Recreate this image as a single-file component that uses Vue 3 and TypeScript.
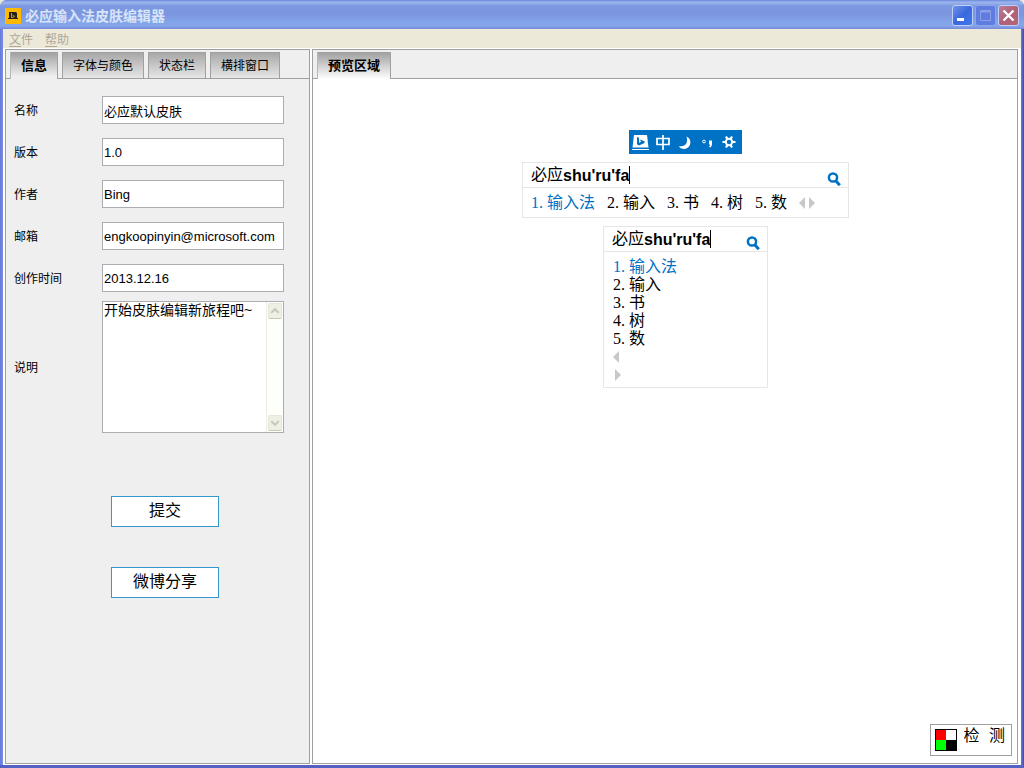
<script setup lang="ts">
import { ref, reactive } from 'vue'

interface Field {
  id: string
  label: string
  value: string
}

const tabs: string[] = ['信息', '字体与颜色', '状态栏', '横排窗口']
const activeTab = ref<number>(0)

const fields = reactive<Field[]>([
  { id: 'name', label: '名称', value: '必应默认皮肤' },
  { id: 'version', label: '版本', value: '1.0' },
  { id: 'author', label: '作者', value: 'Bing' },
  { id: 'mail', label: '邮箱', value: 'engkoopinyin@microsoft.com' },
  { id: 'created', label: '创作时间', value: '2013.12.16' },
])
const description = ref<string>('开始皮肤编辑新旅程吧~')

const candidates: string[] = ['输入法', '输入', '书', '树', '数']
</script>

<template>
  <div class="window">
    <header class="titlebar">
      <svg class="app-icon" viewBox="0 0 16 16" aria-hidden="true">
        <rect width="16" height="16" fill="#ffb900" />
        <path d="M4 4h7l1 1v5h1v1H3v-1h1z" fill="#222" />
        <path d="M6.500 5v4.500h1.500l1.500-1.200-2-1" fill="none" stroke="#ffb900" stroke-width=".8" />
      </svg>
      <h1 class="title">必应输入法皮肤编辑器</h1>
      <div class="caption">
        <button class="cap min" type="button" aria-label="最小化">
          <svg viewBox="0 0 21 21"><rect x="5" y="13" width="7" height="3" fill="#fff" /></svg>
        </button>
        <button class="cap max" type="button" aria-label="最大化" disabled>
          <svg viewBox="0 0 21 21">
            <path d="M5.500 5.500h10v10h-10z" fill="none" stroke="#8d9fe8" />
            <path d="M5 6.500h11" stroke="#8d9fe8" stroke-width="2" />
          </svg>
        </button>
        <button class="cap close" type="button" aria-label="关闭">
          <svg viewBox="0 0 21 21"><path d="M5.500 5.500l10 10M15.500 5.500l-10 10" stroke="#fff" stroke-width="2.400" /></svg>
        </button>
      </div>
    </header>

    <nav class="menubar">
      <button type="button"><u>文</u>件</button>
      <button type="button"><u>帮</u>助</button>
    </nav>

    <main class="panes">
      <section class="pane side">
        <div class="tabstrip" role="tablist">
          <button
            v-for="(tab, i) in tabs"
            :key="tab"
            class="tab"
            :class="{ active: activeTab === i }"
            type="button"
            role="tab"
            :aria-selected="activeTab === i"
            @click="activeTab = i"
          >{{ tab }}</button>
        </div>
        <form class="form" @submit.prevent>
          <div class="fields">
            <div v-for="f in fields" :key="f.id" class="row">
              <label :for="f.id">{{ f.label }}</label>
              <input :id="f.id" v-model="f.value" type="text" />
            </div>
          </div>
          <div class="row">
            <label for="desc">说明</label>
            <div class="memo">
              <textarea id="desc" v-model="description" spellcheck="false"></textarea>
              <div class="scrollbar">
                <button type="button" aria-label="向上">
                  <svg viewBox="0 0 13 14"><path d="M2.500 9l4-4 4 4" fill="none" stroke="#c6c5ba" stroke-width="2.200" /></svg>
                </button>
                <button type="button" aria-label="向下">
                  <svg viewBox="0 0 13 14"><path d="M2.500 5l4 4 4-4" fill="none" stroke="#c6c5ba" stroke-width="2.200" /></svg>
                </button>
              </div>
            </div>
          </div>
          <div class="actions">
            <button class="action" type="submit">提交</button>
            <button class="action" type="button">微博分享</button>
          </div>
        </form>
      </section>

      <section class="pane preview">
        <div class="tabstrip" role="tablist">
          <button class="tab active light" type="button" role="tab" aria-selected="true">预览区域</button>
        </div>
        <div class="stage">
          <div class="status">
            <button type="button" aria-label="Bing">
              <svg viewBox="0 0 22 24">
                <path d="M4 5h13l1.500 12.500H2.500z" fill="#fff" />
                <path d="M2 18h17v2H2z" fill="#fff" />
                <path d="M2 18h17v1H2z" fill="#0072c6" />
                <path d="M7 7l2 .7v5l2-1-1-2.200 4.500 1.700v1.800L9 15.500l-2-1.200z" fill="#0072c6" />
              </svg>
            </button>
            <button type="button" aria-label="中文">
              <svg viewBox="0 0 22 24">
                <path d="M5 8.500h12v6H5zM11 5v15" fill="none" stroke="#fff" stroke-width="1.700" />
              </svg>
            </button>
            <button type="button" aria-label="半角">
              <svg viewBox="0 0 22 24">
                <path d="M12.500 6.500c6 2.500 5 11.500-2 12.500-3 0-5-1-5.500-3 6 1.500 9.500-3 7.500-9.500z" fill="#fff" />
              </svg>
            </button>
            <button type="button" aria-label="标点">
              <svg viewBox="0 0 22 24">
                <circle cx="8" cy="11.500" r="1.400" fill="none" stroke="#fff" />
                <path d="M13 10.500h3v3.500c0 2-1 3-2 3.500l-1-1c1-.5 1-1 1-2h-1z" fill="#fff" />
              </svg>
            </button>
            <button type="button" aria-label="设置">
              <svg viewBox="0 0 22 24">
                <path d="M4.500 12h13M8 6.500l6 11M14 6.500l-6 11" stroke="#fff" stroke-width="2.200" />
                <circle cx="11" cy="12" r="3.200" fill="#0072c6" stroke="#fff" stroke-width="2" />
              </svg>
            </button>
          </div>

          <div class="ime wide">
            <div class="compose">
              <span>必应</span><b>shu'ru'fa</b><i class="caret"></i>
              <svg class="glass" viewBox="0 0 14 14" aria-hidden="true">
                <circle cx="6" cy="5.500" r="4.100" fill="none" stroke="#0072c6" stroke-width="2.500" />
                <path d="M8.500 8.500l4.300 4.700" stroke="#0072c6" stroke-width="3" />
              </svg>
            </div>
            <ol class="cands">
              <li v-for="(c, i) in candidates" :key="c" :class="{ first: i === 0 }"><span class="num">{{ i + 1 }}.</span>{{ c }}</li>
              <li class="pager">
                <svg viewBox="0 0 17 12"><path d="M6 0v12L0 6zM10 0v12l6-6z" fill="#c8c8c8" /></svg>
              </li>
            </ol>
          </div>

          <div class="ime tall">
            <div class="compose">
              <span>必应</span><b>shu'ru'fa</b><i class="caret"></i>
              <svg class="glass" viewBox="0 0 14 14" aria-hidden="true">
                <circle cx="6" cy="5.500" r="4.100" fill="none" stroke="#0072c6" stroke-width="2.500" />
                <path d="M8.500 8.500l4.300 4.700" stroke="#0072c6" stroke-width="3" />
              </svg>
            </div>
            <ol class="cands">
              <li v-for="(c, i) in candidates" :key="c" :class="{ first: i === 0 }"><span class="num">{{ i + 1 }}.</span>{{ c }}</li>
              <li class="arrow"><svg viewBox="0 0 8 12"><path d="M6 0v12L0 6z" fill="#c8c8c8" /></svg></li>
              <li class="arrow"><svg viewBox="0 0 8 12"><path d="M2 0v12l6-6z" fill="#c8c8c8" /></svg></li>
            </ol>
          </div>
        </div>
        <button class="check" type="button">
          <svg viewBox="0 0 22 22" aria-hidden="true">
            <rect width="22" height="22" fill="#000" />
            <rect x="1" y="1" width="10" height="10" fill="#f00" />
            <rect x="11" y="1" width="10" height="10" fill="#fff" />
            <rect x="1" y="11" width="10" height="10" fill="#0f0" />
          </svg>
          <span>检 测</span>
        </button>
      </section>
    </main>
  </div>
</template>

<style>
body {
  background: #ece9d8;
}
</style>

<style scoped>
* {
  box-sizing: border-box;
}
.window {
  display: flex;
  flex-direction: column;
  min-height: 100vh;
  padding: 0 3px 3px;
  background: linear-gradient(90deg, #6a78d8, #7b8fe4 3px, #7b8fe4 calc(100% - 3px), #6a7ade calc(100% - 3px), #4048a8);
  border-radius: 7px 7px 0 0;
  box-shadow: inset 0 -3px #5560c4;
  font: 12px/16px "Liberation Sans", "Noto Sans CJK SC", sans-serif;
  color: #000;
}
button {
  font: inherit;
  color: inherit;
  padding: 0;
  border: 0;
  background: none;
}
svg {
  display: block;
}
.titlebar {
  display: flex;
  align-items: center;
  height: 29px;
  margin: 0 -3px;
  padding: 2px 5px 0 5px;
  border-radius: 7px 7px 0 0;
  background: linear-gradient(#6a86dc 0, #98b2ec 2px, #98b2ec 3px, #7c98e0 6px, #7b96df 14px, #82a4e9 22px, #84a5ea 26px, #7689dc 29px);
}
.app-icon {
  width: 16px;
  height: 16px;
}
.title {
  flex: 1;
  margin: 0 0 0 4px;
  font-size: 14px;
  line-height: 20px;
  font-weight: 700;
  color: #d8e4f8;
}
.caption {
  display: flex;
  gap: 2px;
}
.cap {
  width: 21px;
  height: 21px;
  border: 1px solid #c0d0f8;
  border-radius: 3px;
}
.cap svg {
  width: 21px;
  height: 21px;
  margin: -1px;
}
.min {
  background: linear-gradient(135deg, #6f92ee, #3a68dd 50%, #3f78ec);
}
.max {
  background: #5f7de0;
  border-color: #8fa4ec;
}
.close {
  background: linear-gradient(135deg, #b88098, #b06078 50%, #b46470);
}
.menubar {
  display: flex;
  gap: 12px;
  height: 19px;
  padding: 2px 6px 0;
  background: #ece9d8;
  color: #aca899;
}
.menubar u {
  text-underline-offset: 2px;
}
.panes {
  flex: 1;
  display: flex;
  gap: 2px;
  padding: 1px 3px 1px 2px;
  background: #fff;
}
.pane {
  display: flex;
  flex-direction: column;
  border: 1px solid #a0a0a0;
}
.side {
  width: 305px;
  background: #efefef;
}
.preview {
  flex: 1;
}
.tabstrip {
  display: flex;
  gap: 4px;
  height: 29px;
  padding: 2px 4px 0;
  background: #efefef;
  border-bottom: 1px solid #a0a0a0;
}
.tab {
  height: 26px;
  padding: 0 10px;
  border: 1px solid #a0a0a0;
  border-bottom: 0;
  background: linear-gradient(#a8a8a8, #e6e6e6);
}
.tab.active {
  height: 27px;
  font-size: 13px;
  font-weight: 700;
  border-left-color: #b8b8b8;
  background: linear-gradient(#a2a2a2, #efefef 90%);
}
.tab.active.light {
  background: linear-gradient(#a2a2a2, #fff);
}
.form {
  padding: 17px 8px;
}
.fields {
  display: grid;
  gap: 14px;
  margin-bottom: 9px;
}
.row {
  display: grid;
  grid-template-columns: 88px 182px;
  align-items: center;
}
.row label {
  padding-top: 2px;
}
.row input {
  width: 100%;
  height: 28px;
  padding: 0 1px;
  border: 1px solid #abadb3;
  background: #fff;
  font: 13px/20px "Liberation Sans", "Noto Sans CJK SC", sans-serif;
  color: #000;
}
.memo {
  display: flex;
  height: 132px;
  border: 1px solid #abadb3;
  background: #fff;
}
.memo textarea {
  flex: 1;
  min-width: 0;
  padding: 0 1px;
  border: 0;
  resize: none;
  overflow: hidden;
  background: #fff;
  font: 14px/16px "Liberation Sans", "Noto Sans CJK SC", sans-serif;
  color: #000;
}
.scrollbar {
  display: flex;
  flex-direction: column;
  justify-content: space-between;
  width: 17px;
  padding: 1px;
  border-left: 1px solid #eeede5;
  background: #fdfffa;
}
.scrollbar button {
  height: 16px;
  border: 1px solid #e6e5d8;
  border-bottom-color: #c8c6b4;
  border-radius: 2px;
  background: #f0efe6;
}
.scrollbar svg {
  width: 12px;
  height: 14px;
}
.actions {
  display: grid;
  gap: 40px;
  width: 108px;
  margin: 63px 0 0 97px;
}
.action {
  height: 31px;
  padding-bottom: 2px;
  border: 1px solid #3399cc;
  background: #fff;
  font-size: 16px;
  line-height: 24px;
}
.stage {
  flex: 1;
  display: flex;
  flex-direction: column;
  align-items: center;
  padding: 51px 0 24px 41px;
}
.status {
  display: flex;
  padding: 0 2px 0 1px;
  background: #0072c6;
}
.status svg {
  width: 22px;
  height: 24px;
}
.ime {
  margin-top: 8px;
  border: 1px solid #e6e6e6;
  background: #fff;
  font-size: 16px;
  line-height: 18px;
}
.wide {
  width: 327px;
}
.tall {
  width: 165px;
}
.compose {
  display: flex;
  align-items: center;
  height: 25px;
  padding: 0 7px 0 8px;
  border-bottom: 1px solid #e6e6e6;
}
.compose b {
  padding-top: 2px;
}
.caret {
  width: 1px;
  height: 18px;
  background: #000;
}
.glass {
  width: 14px;
  height: 14px;
  margin: 7px 0 0 auto;
}
.cands {
  display: flex;
  margin: 0;
  list-style: none;
}
.wide .cands {
  align-items: center;
  gap: 12px;
  height: 29px;
  padding: 0 8px;
}
.tall .cands {
  flex-direction: column;
  padding: 6px 9px 3px;
}
.first {
  color: #0072c6;
}
.num {
  display: inline-block;
  width: 16px;
  font-family: "Liberation Serif", serif;
}
.pager svg {
  width: 17px;
  height: 12px;
}
.arrow {
  display: flex;
  align-items: center;
  height: 18px;
}
.arrow svg {
  width: 8px;
  height: 12px;
}
.check {
  display: flex;
  align-self: flex-end;
  align-items: center;
  gap: 6px;
  height: 32px;
  margin: 0 5px 7px 0;
  padding: 0 6px 0 4px;
  border: 1px solid #a0a0a0;
  background: #fff;
  font: 16px/24px "Liberation Mono", "Noto Sans CJK SC", monospace;
}
.check svg {
  width: 22px;
  height: 22px;
}
.check span {
  padding-bottom: 6px;
}
</style>
